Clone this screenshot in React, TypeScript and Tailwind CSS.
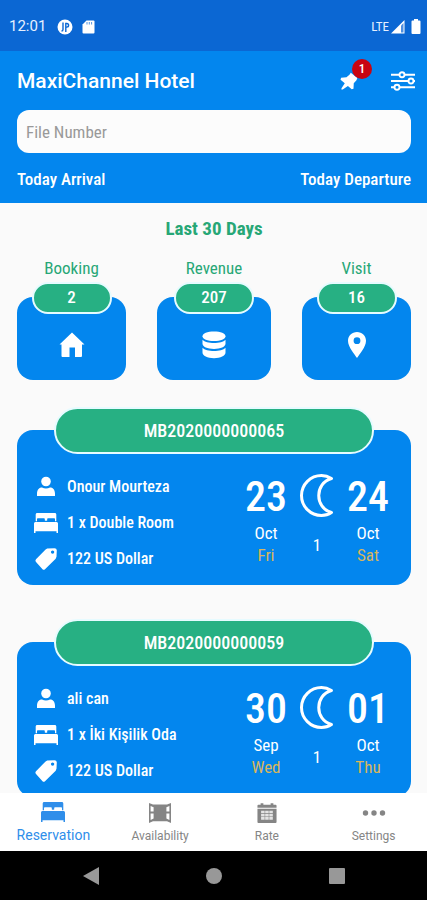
import React from 'react';

type IconProps = { className?: string };

const HomeIcon = ({ className }: IconProps) => (
  <svg viewBox="0 0 26 26" className={className} fill="currentColor" aria-hidden="true">
    <path d="M13 .5 L25.500 12.400 H23 V24 Q23 25 22 25 H16 V15.600 H10.500 V25 H3.500 Q2.500 25 2.500 24 V12.400 H.5 Z" />
  </svg>
);

const CoinsIcon = ({ className }: IconProps) => (
  <svg viewBox="0 0 26 28" className={className} fill="currentColor" aria-hidden="true">
    <path d="M13 .5c6.600 0 11.500 2 11.500 4.700S19.600 10 13 10 1.500 7.900 1.500 5.200 6.400 .5 13 .5z" />
    <path d="M1.500 8.800C3.500 11 8 12.100 13 12.100s9.500-1.100 11.500-3.300v3.900c0 3-4.900 5.200-11.500 5.200S1.500 15.700 1.500 12.700z" />
    <path d="M1.500 16.800C3.500 19 8 20.100 13 20.100s9.500-1.100 11.500-3.300v4.700c0 3.200-4.900 5.700-11.500 5.700s-11.500-2.500-11.500-5.700z" />
  </svg>
);

const PlaceIcon = ({ className }: IconProps) => (
  <svg viewBox="0 0 18 26" className={className} fill="currentColor" aria-hidden="true">
    <path
      fillRule="evenodd"
      d="M9 0c5 0 9 3.800 9 8.700C18 15 11.500 22 9 26 6.500 22 0 15 0 8.700 0 3.800 4 0 9 0zm0 5.300a3.400 3.400 0 1 0 0 6.800 3.400 3.400 0 0 0 0-6.800z"
    />
  </svg>
);

const PersonIcon = ({ className }: IconProps) => (
  <svg viewBox="0 0 24 24" className={className} fill="currentColor" aria-hidden="true">
    <circle cx="12" cy="6.500" r="4.800" />
    <path d="M3 21v-2.200c0-4.500 2.500-6.300 5-6.300 2.500 1.400 5.500 1.400 8 0 2.500 0 5 1.800 5 6.300V21z" />
  </svg>
);

const BedIcon = ({ className }: IconProps) => (
  <svg viewBox="0 0 24 20" className={className} fill="currentColor" aria-hidden="true">
    <path d="M1.700 8.300V1.500C1.700.600 2.300 0 3.200 0h17.600c.900 0 1.500.600 1.500 1.500v6.800h-1.300V6q0-.8-.8-.8h-6.200q-.8 0-.8.8v1.400q-1.200 .6-2.400 0V6q0-.8-.8-.8H3.800Q3 5.200 3 6v2.300z" />
    <path d="M1.300 9h21.400q1.300 0 1.300 1.500V20h-1.500v-1.800h-21V20H0v-9.500Q0 9 1.300 9z" />
  </svg>
);

const TagIcon = ({ className }: IconProps) => (
  <svg viewBox="0 0 24 24" className={className} fill="currentColor" aria-hidden="true">
    <path
      fillRule="evenodd"
      d="M13.200 1.600 20.500 1.200Q22.700 1.200 22.800 3.300L22.500 9.800 21.700 11.700 11 22.200Q9.700 23.200 8.500 22.200L1.800 14.700Q.9 13.500 2 12.300L11.600 2.400zM18.600 3.400a1.700 1.700 0 1 0 0 3.400 1.700 1.700 0 0 0 0-3.400z"
    />
  </svg>
);

const MoonIcon = ({ className }: IconProps) => (
  <svg viewBox="0 0 34 43" className={className} fill="none" stroke="currentColor" strokeWidth="3" strokeLinejoin="round" aria-hidden="true">
    <path d="M31.500 4.500C27.500 2 24.500 1.500 21.500 1.500A20 20 0 0 0 21.500 41.500C25 41.500 28.500 40.500 31.500 38.500C14.500 34 14.500 9 31.500 4.500z" />
  </svg>
);

const PushPinIcon = ({ className }: IconProps) => (
  <svg viewBox="0 0 20 20" className={className} fill="currentColor" aria-hidden="true">
    <path d="M12 .8 19.300 6.800 18.300 9.200 15.300 12.500 15 18.500 13 19.300 8.800 15.600 3 19.500 1.500 19.500 1.700 18 5.300 12.600 .6 8.600 1.200 6.400 7.200 5.800 10.500 3z" />
  </svg>
);

const SlidersIcon = ({ className }: IconProps) => (
  <svg viewBox="0 0 26 20" className={className} fill="none" stroke="currentColor" strokeWidth="1.900" aria-hidden="true">
    <path d="M1 3.800h8.500M14.500 3.800H25M1 10h17.500M23.500 10H25M1 16.300h3.500M9.500 16.300H25" />
    <circle cx="12" cy="3.800" r="2.500" />
    <circle cx="21" cy="10" r="2.500" />
    <circle cx="7" cy="16.300" r="2.500" />
  </svg>
);

const WindowIcon = ({ className }: IconProps) => (
  <svg viewBox="0 0 24 20" className={className} aria-hidden="true">
    <path fill="currentColor" d="M1 0 5 1.500H19L23 0V20L19 18.300H5L1 20z" />
    <path fill="#fff" d="M2.600 3 5.600 4.200V8.600H2.600zM2.600 10.400H5.600V15.600L2.600 16.900zM21.400 3 18.400 4.200V8.600h3zM21.400 10.400H18.400V15.600l3 1.300z" />
  </svg>
);

const CalendarIcon = ({ className }: IconProps) => (
  <svg viewBox="0 0 22 22" className={className} aria-hidden="true">
    <path fill="currentColor" d="M1.500 2H4V.3h3V2h8V.3h3V2h2.500Q21.500 2 21.500 3V5.300H.5V3Q.5 2 1.500 2zM.5 6.300h21V21q0 1-1 1H1.500q-1 0-1-1z" />
    <path fill="#e4e4e4" d="M4.500 8.500h3.900v2.900H4.500zM9 8.500h3.900v2.900H9zM13.500 8.500h3.900v2.900h-3.900zM4.500 12h3.900v2.900H4.500zM9 12h3.900v2.900H9zM13.500 12h3.900v2.900h-3.900zM4.500 15.500h3.900v2.900H4.500zM9 15.500h3.900v2.900H9zM13.500 15.500h3.900v2.900h-3.900z" />
  </svg>
);

const MoreIcon = ({ className }: IconProps) => (
  <svg viewBox="0 0 24 20" className={className} fill="currentColor" aria-hidden="true">
    <circle cx="3.500" cy="10" r="2.700" />
    <circle cx="12" cy="10" r="2.700" />
    <circle cx="20.500" cy="10" r="2.700" />
  </svg>
);

function StatusBar() {
  return (
    <div className="flex h-[51px] shrink-0 items-center bg-[#0b67d3] pl-[9px] pr-[6px] pt-[2px] font-['Roboto',sans-serif] text-[#e6f0ff]">
      <span className="text-[15px]">12:01</span>
      <svg viewBox="0 0 16 16" className="ml-[11px] size-4" aria-hidden="true">
        <circle cx="8" cy="8" r="7.500" fill="#fff" />
        <path d="M6 3.500V10.500Q6 12 4.500 12M8.800 13V4.500h1a1.800 1.800 0 0 1 0 3.600h-1" fill="none" stroke="#0b67d3" strokeWidth="1.400" />
      </svg>
      <svg viewBox="0 0 13 14" className="ml-[9px] h-[14px] w-[13px]" aria-hidden="true">
        <path d="M4.500 .5H11.500Q12.500 .5 12.500 1.500V12.500Q12.500 13.500 11.500 13.500H1.500Q.5 13.500 .5 12.500V4.500z" fill="#fff" />
        <path d="M5 2v2.500M7.300 2v2.500M9.600 2v2.500" stroke="#0b67d3" strokeWidth=".7" />
      </svg>
      <span className="ml-auto font-['Roboto_Condensed',sans-serif] text-[13px]">LTE</span>
      <svg viewBox="0 0 14 14" className="ml-[2px] size-[14px]" aria-hidden="true">
        <path d="M0 13.500 13.500 0V13.500z" fill="#fff" />
        <path d="M10 5.500 12.500 3V12.500H10z" fill="#4f8fe0" />
      </svg>
      <svg viewBox="0 0 10 15" className="ml-[6px] h-[15px] w-[10px]" aria-hidden="true">
        <path d="M3 0h4v1.500h1.500Q9.500 1.500 9.500 2.500V14q0 1-1 1h-7q-1 0-1-1V2.500q0-1 1-1H3z" fill="#fff" />
      </svg>
    </div>
  );
}

function Header() {
  return (
    <header className="shrink-0 bg-[#0386ee] pb-3 pl-[17px] pr-4 pt-3 text-white">
      <div className="flex h-9 items-center">
        <h1 className="pt-[2px] font-['Roboto',sans-serif] text-[21px] font-medium">MaxiChannel Hotel</h1>
        <button type="button" aria-label="Pinned files" className="relative ml-auto">
          <PushPinIcon className="size-[18px]" />
          <span className="absolute -top-[13px] left-[12px] flex size-5 items-center justify-center rounded-full bg-[#c90411] text-[13px] font-medium">
            1
          </span>
        </button>
        <button type="button" aria-label="Filters" className="-mr-[5px] ml-[32px]">
          <SlidersIcon className="h-5 w-[26px]" />
        </button>
      </div>
      <input
        type="text"
        aria-label="File Number"
        placeholder="File Number"
        className="mt-[11px] block h-[43px] w-full rounded-xl bg-[#fcfcfc] px-[9px] text-[17px] text-gray-800 outline-none placeholder:text-[#999]"
      />
      <div className="mt-[14px] flex justify-between text-[17px] font-medium leading-6">
        <a href="#arrival">Today Arrival</a>
        <a href="#departure">Today Departure</a>
      </div>
    </header>
  );
}

const stats = [
  { label: 'Booking', value: '2', icon: <HomeIcon className="size-[26px]" /> },
  { label: 'Revenue', value: '207', icon: <CoinsIcon className="h-7 w-[26px]" /> },
  { label: 'Visit', value: '16', icon: <PlaceIcon className="h-[26px] w-[18px]" /> },
];

function Stats() {
  return (
    <section>
      <h2 className="text-center text-[19px] font-bold leading-6 text-[#27a776]">Last 30 Days</h2>
      <div className="mt-[15px] grid grid-cols-[1fr_114px_1fr] gap-[31px]">
        {stats.map((s) => (
          <div key={s.label} className="flex flex-col items-center">
            <span className="text-[17px] leading-6 text-[#27a776]">{s.label}</span>
            <div className="z-10 mt-[2px] flex h-8 w-20 items-center justify-center rounded-full border-2 border-[#e6fbff] bg-[#27b083] text-[17px] font-medium text-white">
              {s.value}
            </div>
            <div className="-mt-[17px] flex h-[83px] w-full items-center justify-center rounded-2xl bg-[#0386ee] pt-3 text-white">
              {s.icon}
            </div>
          </div>
        ))}
      </div>
    </section>
  );
}

type Reservation = {
  id: string;
  guest: string;
  room: string;
  price: string;
  from: string[];
  to: string[];
  nights: string;
};

const reservations: Reservation[] = [
  { id: 'MB2020000000065', guest: 'Onour Mourteza', room: '1 x Double Room', price: '122 US Dollar', from: ['23', 'Oct', 'Fri'], to: ['24', 'Oct', 'Sat'], nights: '1' },
  { id: 'MB2020000000059', guest: 'ali can', room: '1 x İki Kişilik Oda', price: '122 US Dollar', from: ['30', 'Sep', 'Wed'], to: ['01', 'Oct', 'Thu'], nights: '1' },
];

function DateBlock({ date }: { date: string[] }) {
  return (
    <div className="flex w-12 flex-col items-center leading-[22px]">
      <span className="text-[42px] font-medium leading-[50px]">{date[0]}</span>
      <span>{date[1]}</span>
      <span className="text-[#d9b65c]">{date[2]}</span>
    </div>
  );
}

function ReservationCard({ r }: { r: Reservation }) {
  return (
    <article className="flex flex-col items-center text-[17px] text-white">
      <h3 className="z-10 flex h-[47px] w-[81%] items-center justify-center rounded-full border-2 border-[#e6fbff] bg-[#27b083] text-[18px] font-medium">
        {r.id}
      </h3>
      <div className="-mt-6 flex h-[155px] w-full justify-between rounded-2xl bg-[#0386ee] pl-[17px] pr-[19px] pt-[39px]">
        <ul className="text-[16px] font-medium">
          <li className="flex h-9 items-center gap-[9px]"><PersonIcon className="size-6" />{r.guest}</li>
          <li className="flex h-9 items-center gap-[9px]"><BedIcon className="h-5 w-6" />{r.room}</li>
          <li className="flex h-9 items-center gap-[9px]"><TagIcon className="size-6" />{r.price}</li>
        </ul>
        <div className="flex gap-[10px] pt-[3px]">
          <DateBlock date={r.from} />
          <div className="flex flex-col items-center pt-[2px]">
            <MoonIcon className="h-[43px] w-[34px]" />
            <span className="mt-4 leading-6">{r.nights}</span>
          </div>
          <DateBlock date={r.to} />
        </div>
      </div>
    </article>
  );
}

const tabs = [
  { label: 'Reservation', Icon: BedIcon, active: true },
  { label: 'Availability', Icon: WindowIcon, active: false },
  { label: 'Rate', Icon: CalendarIcon, active: false },
  { label: 'Settings', Icon: MoreIcon, active: false },
];

function TabBar() {
  return (
    <nav className="grid h-[58px] shrink-0 grid-cols-4 bg-white font-['Roboto',sans-serif]">
      {tabs.map(({ label, Icon, active }) => (
        <button
          key={label}
          type="button"
          className={active ? 'flex flex-col items-center pt-[9px] text-[14px] leading-5 text-[#2f8eea]' : 'flex flex-col items-center pt-[10px] text-[12px] leading-5 text-[#858585]'}
        >
          <Icon className="mb-[3px] h-5 w-6" />
          {label}
        </button>
      ))}
    </nav>
  );
}

function SystemBar() {
  return (
    <div className="flex h-[49px] shrink-0 items-center justify-center gap-[107px] bg-black text-[#989898]">
      <button type="button" aria-label="Back"><svg viewBox="0 0 16 18" className="h-[18px] w-4" fill="currentColor"><path d="M0 9 16 0V18z" /></svg></button>
      <button type="button" aria-label="Home" className="size-4 rounded-full bg-[#989898]" />
      <button type="button" aria-label="Recent apps" className="size-4 rounded-[1px] bg-[#989898]" />
    </div>
  );
}

export default function App() {
  return (
    <div className="flex h-screen flex-col bg-[#fafafa] font-['Roboto_Condensed','Liberation_Sans_Narrow',sans-serif]">
      <StatusBar />
      <Header />
      <main className="min-h-0 flex-1 overflow-y-auto pl-[17px] pr-4 pt-[14px] [scrollbar-width:none]">
        <Stats />
        <div className="mt-[27px] flex flex-col gap-[34px] pb-6">
          {reservations.map((r) => (
            <ReservationCard key={r.id} r={r} />
          ))}
        </div>
      </main>
      <TabBar />
      <SystemBar />
    </div>
  );
}
